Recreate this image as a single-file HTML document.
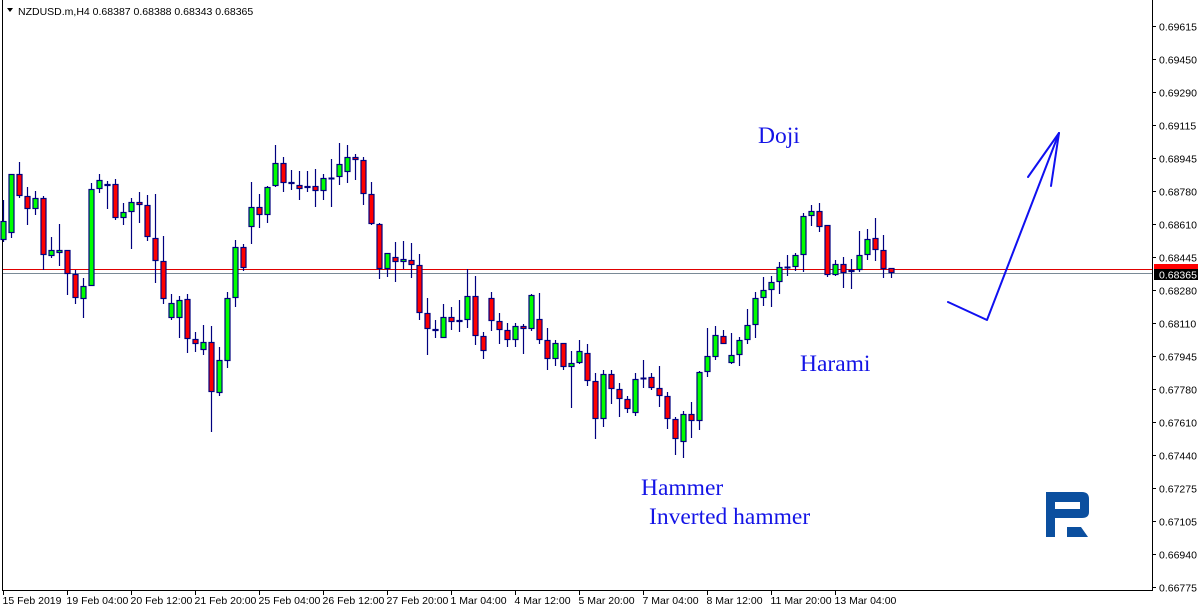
<!DOCTYPE html>
<html><head><meta charset="utf-8"><style>
html,body{margin:0;padding:0;background:#fff;width:1200px;height:611px;overflow:hidden}
svg{display:block}
text{font-family:"Liberation Sans",sans-serif}
.ax{font-size:10.5px;fill:#000}
.lbl{font-family:"Liberation Serif",serif;font-size:23.5px;fill:#1414e6}
</style></head><body>
<svg id="s" width="1200" height="611" viewBox="0 0 1200 611" xmlns="http://www.w3.org/2000/svg">
<rect width="1200" height="611" fill="#fff"/>
<line x1="2.5" y1="0" x2="2.5" y2="590.5" stroke="#000" stroke-width="1"/>
<line x1="2" y1="590.5" x2="1152.5" y2="590.5" stroke="#000"/>
<line x1="1152.5" y1="0" x2="1152.5" y2="591" stroke="#000"/>
<line x1="3" y1="269.5" x2="1152" y2="269.5" stroke="#e00000"/>
<line x1="3" y1="273.5" x2="1152" y2="273.5" stroke="#7a8a96"/>
<g id="candles"></g>
<polygon points="7,8 13,8 10,12" fill="#000"/>
<text x="18" y="15" font-size="10.5" fill="#000">NZDUSD.m,H4  0.68387 0.68388 0.68343 0.68365</text>
<g id="yax"></g>
<g id="xax"></g>
<rect x="1154" y="264" width="44" height="7" fill="#ff0000"/>
<rect x="1154" y="269" width="44" height="11" fill="#000"/>
<text x="1159" y="278.5" class="ax" style="fill:#fff">0.68365</text>
<text x="758" y="143" class="lbl">Doji</text>
<text x="800" y="371" class="lbl">Harami</text>
<text x="641" y="495" class="lbl">Hammer</text>
<text x="649" y="524" class="lbl">Inverted hammer</text>
<g fill="none" stroke="#1010f0" stroke-width="2" stroke-linecap="round" stroke-linejoin="round">
<polyline points="948,302 987,320 1059,133"/>
<line x1="1059" y1="133" x2="1028" y2="177"/>
<line x1="1059" y1="133" x2="1051" y2="186"/>
</g>
<path fill="#0b4f9f" fill-rule="evenodd" d="M1046,492 H1082 Q1089,492 1089,499 V512 Q1089,518 1082,518 H1055 V537 H1046 Z M1055,502 V509 H1080 V502 Z"/>
<polygon fill="#0b4f9f" points="1067,527 1081,527 1088,537 1067,537"/>
</svg>
<script>
var d=[
[221,240,200,242,'G'],[174,233,174,238,'G'],[174,196,162,198,'R'],[196,209,187,225,'R'],[198,209,191,215,'G'],
[198,255,196,270,'R'],[250,256,237,258,'G'],[250,253,224,266,'G'],[250,274,250,295,'R'],[274,298,270,304,'R'],
[286,299,278,318,'G'],[189,286,183,286,'G'],[180,189,174,193,'G'],[184,186,181,209,'G'],[184,218,179,220,'R'],
[212,218,203,225,'G'],[202,212,198,249,'G'],[202,205,192,223,'R'],[205,237,195,241,'R'],[238,261,194,283,'R'],
[261,299,236,304,'R'],[303,318,294,320,'G'],[300,318,296,338,'G'],[299,339,294,353,'R'],[339,344,332,352,'R'],
[342,350,325,355,'G'],[342,392,326,432,'R'],[360,393,347,396,'G'],[298,361,292,368,'G'],[247,298,240,307,'G'],
[247,268,244,271,'R'],[207,227,182,244,'G'],[207,215,194,228,'R'],[187,215,186,223,'G'],[163,186,145,187,'G'],
[163,183,157,192,'R'],[182,184,170,190,'G'],[185,189,171,200,'R'],[186,188,171,192,'G'],[186,191,169,207,'R'],
[178,191,174,200,'G'],[178,179,159,207,'R'],[164,177,143,185,'G'],[157,172,145,183,'G'],[157,160,154,180,'R'],
[160,194,157,205,'R'],[194,224,182,225,'R'],[224,269,223,279,'R'],[253,269,253,277,'G'],[257,262,242,282,'R'],
[259,262,241,269,'G'],[260,265,243,278,'R'],[265,313,254,320,'R'],[313,329,298,355,'R'],[329,331,320,338,'R'],
[317,338,304,338,'G'],[317,322,307,330,'R'],[320,322,300,332,'G'],[296,320,269,328,'G'],[296,336,276,345,'R'],
[336,351,332,359,'R'],[298,321,292,331,'R'],[321,330,313,344,'R'],[330,340,323,347,'R'],[326,340,323,347,'G'],
[326,329,324,354,'R'],[295,329,294,331,'G'],[319,340,293,344,'R'],[340,359,328,370,'R'],[343,359,340,366,'G'],
[343,367,343,370,'R'],[363,367,351,408,'G'],[351,363,340,364,'G'],[353,381,344,386,'R'],[381,419,373,439,'R'],
[374,419,370,427,'G'],[374,389,370,404,'R'],[389,399,383,417,'R'],[399,409,396,413,'R'],[379,413,373,416,'G'],
[378,379,360,388,'G'],[377,388,373,390,'R'],[388,396,366,407,'R'],[396,419,392,429,'R'],[419,439,417,455,'R'],
[414,442,411,458,'G'],[414,421,402,438,'R'],[372,421,371,430,'G'],[356,372,328,377,'G'],[335,357,326,360,'G'],
[336,344,330,344,'R'],[355,363,333,364,'G'],[340,355,337,366,'G'],[325,340,309,344,'G'],[298,325,292,338,'G'],
[290,298,277,306,'G'],[282,290,276,307,'G'],[267,282,262,294,'G'],[267,268,255,276,'G'],[255,267,253,271,'G'],
[216,255,213,272,'G'],[211,216,205,226,'G'],[211,227,203,232,'R'],[225,275,225,277,'R'],[264,275,260,276,'G'],
[264,273,257,288,'R'],[270,272,259,289,'G'],[255,270,231,272,'G'],[239,255,229,260,'G'],[238,250,218,261,'R'],
[250,269,235,278,'R'],[268,273,268,278,'R']];
var h='';
d.forEach(function(c,i){
 var x=3.5+8*i;
 h+='<line x1="'+x+'" y1="'+c[2]+'" x2="'+x+'" y2="'+c[3]+'" stroke="#00007f" stroke-width="1.2"/>';
 var t=c[0],b=c[1];
 if(b-t<2){h+='<rect x="'+(x-3)+'" y="'+(t-0.5)+'" width="6" height="2" fill="#00007f"/>';}
 else h+='<rect x="'+(x-2.5)+'" y="'+(t+0.5)+'" width="5" height="'+(b-t-1)+'" fill="'+(c[4]=='G'?'#00ff00':'#ff0000')+'" stroke="#00007f" stroke-width="1.2"/>';
});
document.getElementById('candles').innerHTML=h;
var p=['0.69615','0.69450','0.69290','0.69115','0.68945','0.68780','0.68610','0.68445','0.68280','0.68110','0.67945','0.67780','0.67610','0.67440','0.67275','0.67105','0.66940','0.66775'];
var y0=26.5,step=(587.5-26.5)/17,g='';
p.forEach(function(v,i){var y=y0+step*i;g+='<line x1="1152" y1="'+y+'" x2="1156" y2="'+y+'" stroke="#000"/><text class="ax" x="1159" y="'+(y+4)+'">'+v+'</text>';});
document.getElementById('yax').innerHTML=g;
var L=['15 Feb 2019','19 Feb 04:00','20 Feb 12:00','21 Feb 20:00','25 Feb 04:00','26 Feb 12:00','27 Feb 20:00','1 Mar 04:00','4 Mar 12:00','5 Mar 20:00','7 Mar 04:00','8 Mar 12:00','11 Mar 20:00','13 Mar 04:00'],q='';
L.forEach(function(v,i){var x=3.5+64*i;q+='<line x1="'+x+'" y1="590" x2="'+x+'" y2="595" stroke="#000"/><text class="ax" x="'+(x-1)+'" y="604">'+v+'</text>';});
document.getElementById('xax').innerHTML=q;
</script>
</body></html>
